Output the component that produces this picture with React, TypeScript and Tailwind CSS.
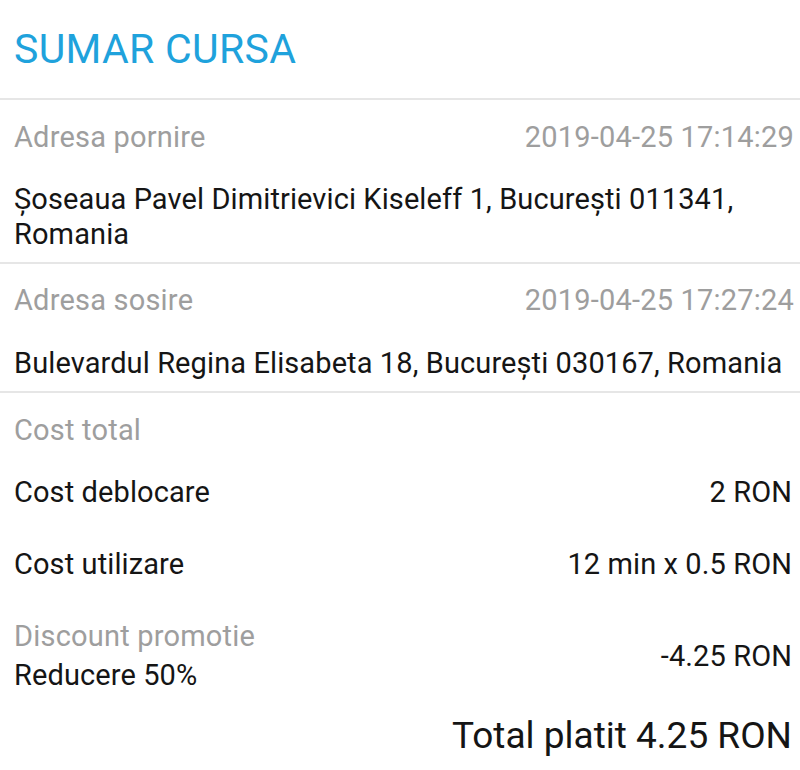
const LABEL = "text-[29px] leading-[36px] tracking-[0.2px] text-[#9e9e9e]";
const VALUE = "text-[29px] leading-[36px] tracking-[0.1px] text-[#151515]";

function Divider() {
  return <div className="h-[2px] bg-[#e6e6e6]" />;
}

function AddressBlock({
  label,
  time,
  address,
  top,
  gap,
  bottom,
}: {
  label: string;
  time: string;
  address: string;
  top: string;
  gap: string;
  bottom: string;
}) {
  return (
    <section className={`pl-[14px] pr-[6px] ${top} ${bottom}`}>
      <div className={`flex justify-between ${LABEL}`}>
        <span>{label}</span>
        <span>{time}</span>
      </div>
      <p className={`${gap} text-[29px] leading-[35px] tracking-[0.1px] text-[#151515]`}>
        {address}
      </p>
    </section>
  );
}

export default function App() {
  return (
    <div className="h-[770px] w-[800px] overflow-hidden bg-white font-['Roboto',sans-serif]">
      <header className="pl-[14px] pt-[25px] pb-[25px]">
        <h1 className="text-[41px] leading-[48px] tracking-[0.3px] text-[#1fa2dc]">
          SUMAR CURSA
        </h1>
      </header>
      <Divider />

      <AddressBlock
        label="Adresa pornire"
        time="2019-04-25 17:14:29"
        address="Șoseaua Pavel Dimitrievici Kiseleff 1, București 011341, Romania"
        top="pt-[19px]"
        gap="mt-[27px]"
        bottom="pb-[10px]"
      />
      <Divider />

      <AddressBlock
        label="Adresa sosire"
        time="2019-04-25 17:27:24"
        address="Bulevardul Regina Elisabeta 18, București 030167, Romania"
        top="pt-[18px]"
        gap="mt-[28px]"
        bottom="pb-[10px]"
      />
      <Divider />

      <section className="pl-[14px] pr-[8px] pt-[19px]">
        <p className={LABEL}>Cost total</p>

        <div className={`mt-[26px] flex justify-between ${VALUE}`}>
          <span>Cost deblocare</span>
          <span>2 RON</span>
        </div>

        <div className={`mt-[36px] flex justify-between ${VALUE}`}>
          <span>Cost utilizare</span>
          <span>12 min x 0.5 RON</span>
        </div>

        <div className="mt-[35px] flex items-center justify-between">
          <div className="text-[29px] leading-[39px]">
            <p className="tracking-[0.2px] text-[#9e9e9e]">Discount promotie</p>
            <p className="tracking-[0.1px] text-[#151515]">Reducere 50%</p>
          </div>
          <span className={VALUE}>-4.25 RON</span>
        </div>

        <p className="mt-[19px] text-right text-[37px] leading-[44px] text-[#151515]">
          Total platit 4.25 RON
        </p>
      </section>
    </div>
  );
}
